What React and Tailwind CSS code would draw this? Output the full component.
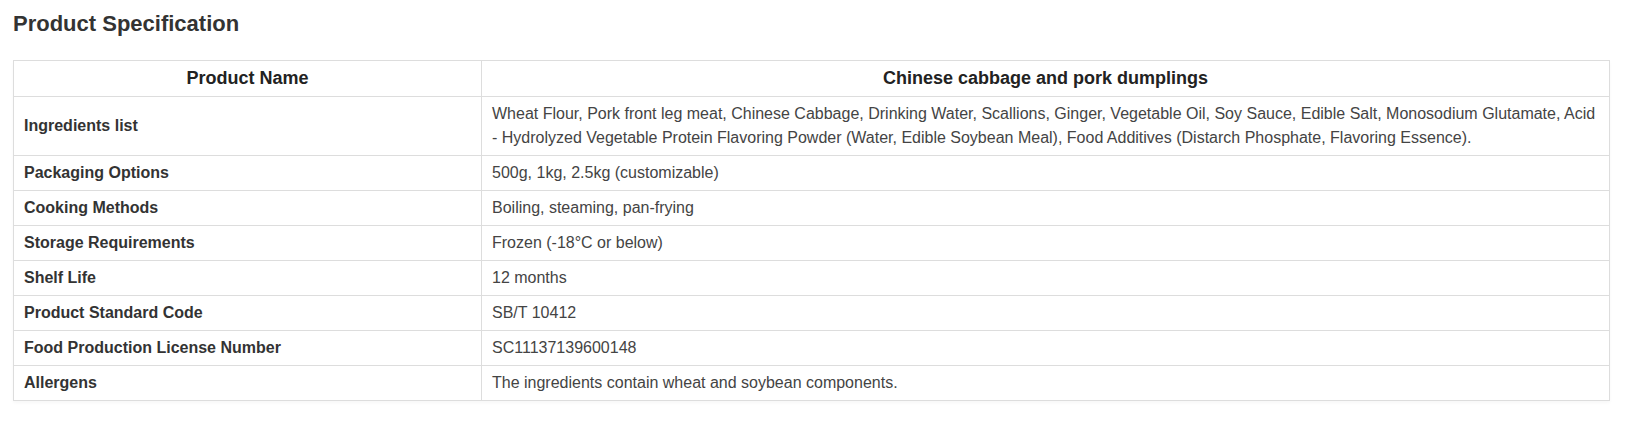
const rows = [
  {
    label: "Ingredients list",
    value:
      "Wheat Flour, Pork front leg meat, Chinese Cabbage, Drinking Water, Scallions, Ginger, Vegetable Oil, Soy Sauce, Edible Salt, Monosodium Glutamate, Acid - Hydrolyzed Vegetable Protein Flavoring Powder (Water, Edible Soybean Meal), Food Additives (Distarch Phosphate, Flavoring Essence).",
  },
  { label: "Packaging Options", value: "500g, 1kg, 2.5kg (customizable)" },
  { label: "Cooking Methods", value: "Boiling, steaming, pan-frying" },
  { label: "Storage Requirements", value: "Frozen (-18°C or below)" },
  { label: "Shelf Life", value: "12 months" },
  { label: "Product Standard Code", value: "SB/T 10412" },
  { label: "Food Production License Number", value: "SC11137139600148" },
  { label: "Allergens", value: "The ingredients contain wheat and soybean components." },
];

const App = () => {
  return (
    <div
      className="min-h-screen bg-white px-[13px] pt-[10px] text-[#333]"
      style={{ fontFamily: '"Liberation Sans", Arial, sans-serif' }}
    >
      <h2 className="text-[22px] font-bold leading-[28px] text-[#333]">
        Product Specification
      </h2>

      <table className="mt-[22px] w-[1597px] table-fixed border-collapse border border-[#ddd] text-[16px] leading-[24px] shadow-[0_2px_3px_rgba(0,0,0,0.03)]">
        <thead>
          <tr>
            <th className="w-[468px] border border-[#ddd] px-[10px] py-[5px] text-center text-[18px] font-bold leading-[25px] text-[#222]">
              Product Name
            </th>
            <th className="border border-[#ddd] px-[10px] py-[5px] text-center text-[18px] font-bold leading-[25px] text-[#222]">
              Chinese cabbage and pork dumplings
            </th>
          </tr>
        </thead>
        <tbody>
          {rows.map((row) => (
            <tr key={row.label}>
              <td className="border border-[#ddd] px-[10px] py-[5px] font-bold text-[#333]">
                {row.label}
              </td>
              <td className="border border-[#ddd] px-[10px] py-[5px] text-[#444]">
                {row.value}
              </td>
            </tr>
          ))}
        </tbody>
      </table>
    </div>
  );
};

export default App;
